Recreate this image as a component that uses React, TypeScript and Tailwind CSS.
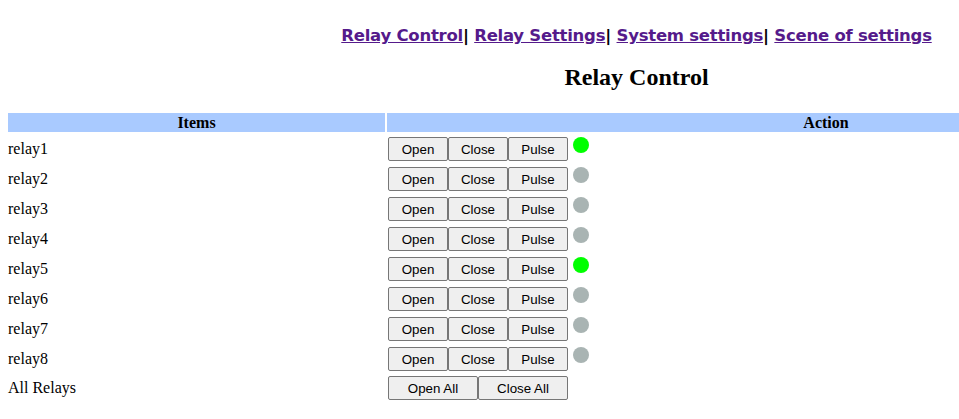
import React from "react";

const relays = [
  { name: "relay1", on: true },
  { name: "relay2", on: false },
  { name: "relay3", on: false },
  { name: "relay4", on: false },
  { name: "relay5", on: true },
  { name: "relay6", on: false },
  { name: "relay7", on: false },
  { name: "relay8", on: false },
];

const navLinks = ["Relay Control", "Relay Settings", "System settings", "Scene of settings"];

const Btn = ({ label, w }: { label: string; w: string }) => (
  <button
    className={`${w} h-[24px] bg-[#efefef] border border-[#767676] rounded-[2px] text-[13.33px] text-black font-['Liberation_Sans',Arial,sans-serif] leading-none pt-px`}
  >
    {label}
  </button>
);

export default function App() {
  return (
    <div className="w-screen overflow-hidden">
      <div className="w-[1273px] bg-white p-2 font-['Liberation_Serif','Times_New_Roman',serif] text-black">
        <div className="flex justify-center pt-[16px] h-[44px] text-[16.5px] font-bold font-['DejaVu_Sans',Verdana,sans-serif] tracking-[-0.25px]">
          {navLinks.map((l, i) => (
            <span key={l} className="whitespace-pre">
              <a href="#" className="text-[#551a8b] underline">
                {l}
              </a>
              {i < navLinks.length - 1 && <span className="text-black">| </span>}
            </span>
          ))}
        </div>
        <h1 className="text-center text-[24px] font-bold leading-[28px] mt-[11px] mb-[22px]">Relay Control</h1>

        <div className="grid grid-cols-[377px_1fr] gap-[2px] text-[16px]">
          <div className="h-[19px] bg-[#a9caff] text-center font-bold leading-[19px]">Items</div>
          <div className="h-[19px] bg-[#a9caff] text-center font-bold leading-[19px]">Action</div>

          {relays.map((r) => (
            <React.Fragment key={r.name}>
              <div className="h-[28px] flex items-center pt-[2px]">{r.name}</div>
              <div className="h-[28px] flex items-start pt-[3px] pl-px">
                <Btn label="Open" w="w-[60px]" />
                <Btn label="Close" w="w-[60px]" />
                <Btn label="Pulse" w="w-[60px]" />
                <span
                  className={`ml-[5px] w-[16px] h-[16px] rounded-full ${r.on ? "bg-[#00ff00]" : "bg-[#a9b4b3]"}`}
                />
              </div>
            </React.Fragment>
          ))}

          <div className="h-[26px] flex items-center pt-[2px]">All Relays</div>
          <div className="h-[26px] flex items-start pt-[2px] pl-px">
            <Btn label="Open All" w="w-[90px]" />
            <Btn label="Close All" w="w-[90px]" />
          </div>
        </div>
      </div>
    </div>
  );
}
